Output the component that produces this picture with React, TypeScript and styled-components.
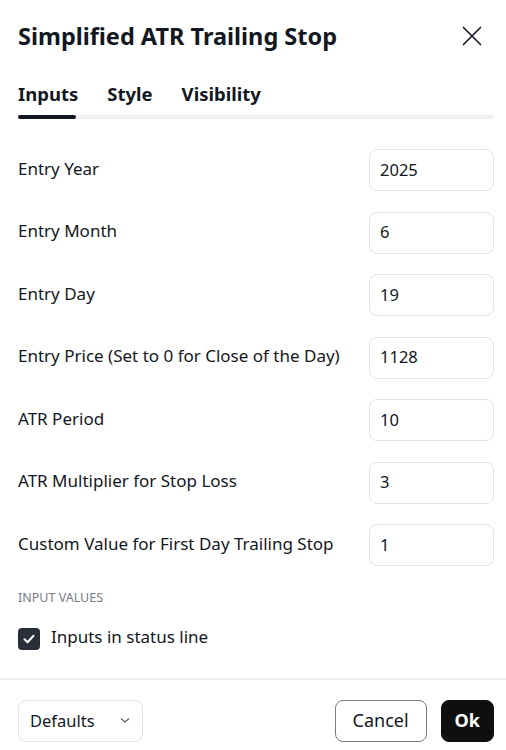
import React from "react";
import styled, { createGlobalStyle } from "styled-components";

const Global = createGlobalStyle`
  html, body { margin: 0; padding: 0; background: #fff; }
  body { font-family: "Noto Sans", "DejaVu Sans", sans-serif; color: #131722; }
  * { box-sizing: border-box; }
`;

const Dialog = styled.div`
  width: 506px;
  height: 750px;
  display: flex;
  flex-direction: column;
  background: #fff;
`;

const Header = styled.div`
  display: flex;
  align-items: center;
  justify-content: space-between;
  padding: 0 18px;
  height: 72px;
`;

const Title = styled.h1`
  margin: 0;
  font-size: 23.5px;
  font-weight: 700;
  color: #131722;
`;

const CloseBtn = styled.button`
  border: none;
  background: none;
  padding: 0;
  width: 24px;
  height: 24px;
  display: flex;
  align-items: center;
  justify-content: center;
  margin-right: 4px;
  cursor: pointer;
`;

const Tabs = styled.div`
  margin: 0 12px 0 18px;
  display: flex;
  flex-direction: column;
`;

const TabRow = styled.div`
  display: flex;
  gap: 29px;
  height: 43px;
  align-items: center;
`;

const Tab = styled.div<{ $active?: boolean }>`
  font-size: 18.5px;
  font-weight: 700;
  color: #131722;
`;

const Track = styled.div`
  height: 4px;
  border-radius: 2px;
  background: #f0f0f0;
  display: flex;
`;

const Indicator = styled.div`
  width: 58px;
  height: 4px;
  border-radius: 2px;
  background: #131722;
`;

const Content = styled.div`
  flex: 1;
  padding: 30px 12px 0 18px;
  display: flex;
  flex-direction: column;
`;

const Rows = styled.div`
  display: flex;
  flex-direction: column;
  gap: 20.5px;
`;

const Row = styled.div`
  display: flex;
  align-items: center;
  justify-content: space-between;
  height: 42px;
`;

const Label = styled.div`
  font-size: 17px;
  line-height: 22px;
  padding-bottom: 3px;
  color: #131722;
`;

const Input = styled.div`
  width: 125px;
  height: 42px;
  border: 1px solid #e0e3eb;
  border-radius: 8px;
  display: flex;
  align-items: center;
  padding: 0 10px 2px;
  font-size: 16.5px;
  color: #131722;
`;

const SectionTitle = styled.div`
  margin-top: 23px;
  font-size: 12.5px;
  color: #787b86;
  text-transform: uppercase;
`;

const CheckRow = styled.div`
  display: flex;
  align-items: center;
  gap: 11px;
  margin-top: 20px;
`;

const Box = styled.div`
  width: 22px;
  height: 22px;
  border-radius: 4px;
  background: #2a2e39;
  display: flex;
  align-items: center;
  justify-content: center;
`;

const Divider = styled.div`
  height: 2px;
  background: #f0f0f0;
`;

const Footer = styled.div`
  display: flex;
  align-items: center;
  justify-content: space-between;
  padding: 20px 12px 8px 18px;
`;

const Select = styled.div`
  width: 125px;
  height: 42px;
  border: 1px solid #e0e3eb;
  border-radius: 8px;
  display: flex;
  align-items: center;
  justify-content: space-between;
  padding: 0 10px 2px 11px;
  font-size: 16.5px;
`;

const Buttons = styled.div`
  display: flex;
  gap: 14px;
`;

const Button = styled.button<{ $primary?: boolean }>`
  height: 42px;
  padding: 0 ${(p) => (p.$primary ? "13px" : "17px")} 2px;
  border-radius: 8px;
  font-family: inherit;
  font-size: 18px;
  font-weight: ${(p) => (p.$primary ? 700 : 400)};
  border: 1px solid ${(p) => (p.$primary ? "#0f0f0f" : "#7a7a7a")};
  background: ${(p) => (p.$primary ? "#0f0f0f" : "#fff")};
  color: ${(p) => (p.$primary ? "#fff" : "#131722")};
`;

const fields: [string, string][] = [
  ["Entry Year", "2025"],
  ["Entry Month", "6"],
  ["Entry Day", "19"],
  ["Entry Price (Set to 0 for Close of the Day)", "1128"],
  ["ATR Period", "10"],
  ["ATR Multiplier for Stop Loss", "3"],
  ["Custom Value for First Day Trailing Stop", "1"],
];

export default function App() {
  return (
    <Dialog>
      <Global />
      <Header>
        <Title>Simplified ATR Trailing Stop</Title>
        <CloseBtn aria-label="Close">
          <svg width="22" height="22" viewBox="0 0 22 22">
            <path d="M2 2L20 20M20 2L2 20" stroke="#131722" strokeWidth="1.6" />
          </svg>
        </CloseBtn>
      </Header>
      <Tabs>
        <TabRow>
          <Tab $active>Inputs</Tab>
          <Tab>Style</Tab>
          <Tab>Visibility</Tab>
        </TabRow>
        <Track>
          <Indicator />
        </Track>
      </Tabs>
      <Content>
        <Rows>
          {fields.map(([l, v]) => (
            <Row key={l}>
              <Label>{l}</Label>
              <Input>{v}</Input>
            </Row>
          ))}
        </Rows>
        <SectionTitle>Input values</SectionTitle>
        <CheckRow>
          <Box>
            <svg width="14" height="14" viewBox="0 0 14 14">
              <path d="M2.5 7.2L5.6 10.2L11.5 3.8" fill="none" stroke="#fff" strokeWidth="2" strokeLinecap="round" strokeLinejoin="round" />
            </svg>
          </Box>
          <Label>Inputs in status line</Label>
        </CheckRow>
      </Content>
      <Divider />
      <Footer>
        <Select>
          Defaults
          <svg width="14" height="14" viewBox="0 0 14 14">
            <path d="M3 5.5L7 9L11 5.5" fill="none" stroke="#6a6d78" strokeWidth="1.4" />
          </svg>
        </Select>
        <Buttons>
          <Button>Cancel</Button>
          <Button $primary>Ok</Button>
        </Buttons>
      </Footer>
    </Dialog>
  );
}
